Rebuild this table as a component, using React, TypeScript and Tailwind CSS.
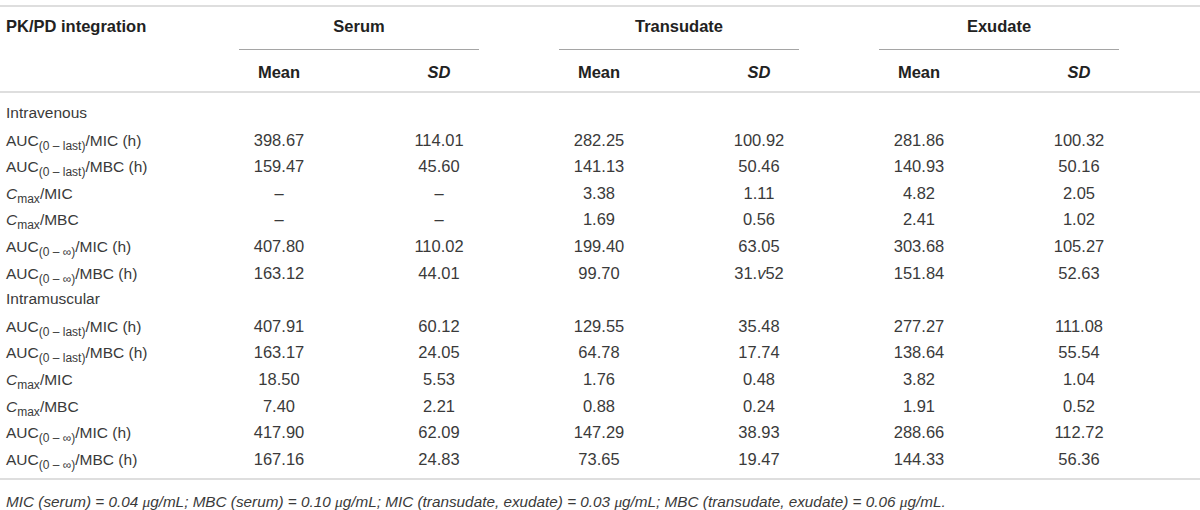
import React from "react";

const font = { fontFamily: '"Liberation Sans", Arial, sans-serif' };

type Cell = React.ReactNode;

function Sub({ children }: { children: React.ReactNode }) {
  return <span className="text-[12px] relative top-[4px] align-baseline leading-none">{children}</span>;
}

const AUClast = (d: string) => (
  <>
    AUC<Sub>(0 – last)</Sub>/{d} (h)
  </>
);
const AUCinf = (d: string) => (
  <>
    AUC<Sub>(0 – ∞)</Sub>/{d} (h)
  </>
);
const Cmax = (d: string) => (
  <>
    <i>C</i>
    <Sub>max</Sub>/{d}
  </>
);

type Row = { label: Cell; vals?: Cell[] };

const rows: Row[] = [
  { label: "Intravenous" },
  { label: AUClast("MIC"), vals: ["398.67", "114.01", "282.25", "100.92", "281.86", "100.32"] },
  { label: AUClast("MBC"), vals: ["159.47", "45.60", "141.13", "50.46", "140.93", "50.16"] },
  { label: Cmax("MIC"), vals: ["–", "–", "3.38", "1.11", "4.82", "2.05"] },
  { label: Cmax("MBC"), vals: ["–", "–", "1.69", "0.56", "2.41", "1.02"] },
  { label: AUCinf("MIC"), vals: ["407.80", "110.02", "199.40", "63.05", "303.68", "105.27"] },
  {
    label: AUCinf("MBC"),
    vals: [
      "163.12",
      "44.01",
      "99.70",
      <>
        31.<i>v</i>52
      </>,
      "151.84",
      "52.63",
    ],
  },
  { label: "Intramuscular" },
  { label: AUClast("MIC"), vals: ["407.91", "60.12", "129.55", "35.48", "277.27", "111.08"] },
  { label: AUClast("MBC"), vals: ["163.17", "24.05", "64.78", "17.74", "138.64", "55.54"] },
  { label: Cmax("MIC"), vals: ["18.50", "5.53", "1.76", "0.48", "3.82", "1.04"] },
  { label: Cmax("MBC"), vals: ["7.40", "2.21", "0.88", "0.24", "1.91", "0.52"] },
  { label: AUCinf("MIC"), vals: ["417.90", "62.09", "147.29", "38.93", "288.66", "112.72"] },
  { label: AUCinf("MBC"), vals: ["167.16", "24.83", "73.65", "19.47", "144.33", "56.36"] },
];

const groups = ["Serum", "Transudate", "Exudate"];

const mu = <span style={{ fontFamily: '"Liberation Serif", serif' }}>μ</span>;

export default function App() {
  return (
    <div className="w-[1200px] h-[510px] bg-white overflow-hidden text-[#3a3a3a] pt-[5px]" style={font}>
      <div className="border-t-2 border-[#dedede]">
        {/* header row 1 */}
        <div className="grid grid-cols-[199px_repeat(3,320px)] h-[43px] text-[16.5px] font-bold text-[#222]">
          <div className="pl-[6px] pt-[9px] leading-[20px] whitespace-nowrap">PK/PD integration</div>
          {groups.map((g) => (
            <div key={g} className="flex flex-col">
              <div className="text-center pt-[9px] leading-[20px] h-[42px]">{g}</div>
              <div className="mx-[40px] border-t border-[#a5a5a5]" />
            </div>
          ))}
        </div>
        {/* header row 2 */}
        <div className="grid grid-cols-[199px_repeat(6,160px)] h-[43px] border-b-2 border-[#dedede] text-[16.5px] font-bold text-[#222]">
          <div />
          {[0, 1, 2].map((i) => (
            <React.Fragment key={i}>
              <div className="text-center pt-[12px] leading-[20px]">Mean</div>
              <div className="text-center pt-[12px] leading-[20px] italic">SD</div>
            </React.Fragment>
          ))}
        </div>
        {/* body */}
        <div className="pt-[7px] pb-[6px] border-b-2 border-[#dedede]">
          {rows.map((r, idx) => (
            <div
              key={idx}
              className="grid grid-cols-[199px_repeat(6,160px)] h-[26.6px] items-baseline pt-[3px] leading-[20px]"
            >
              <div className="pl-[6px] whitespace-nowrap text-[15.5px]">{r.label}</div>
              {r.vals
                ? r.vals.map((v, j) => (
                    <div key={j} className="text-center whitespace-nowrap text-[16.5px]">
                      {v}
                    </div>
                  ))
                : null}
            </div>
          ))}
        </div>
        {/* footnote */}
        <div className="pl-[6px] pt-[12px] text-[15.3px] italic leading-[20px] whitespace-nowrap">
          MIC (serum) = 0.04 {mu}g/mL; MBC (serum) = 0.10 {mu}g/mL; MIC (transudate, exudate) = 0.03 {mu}g/mL; MBC
          (transudate, exudate) = 0.06 {mu}g/mL.
        </div>
      </div>
    </div>
  );
}
